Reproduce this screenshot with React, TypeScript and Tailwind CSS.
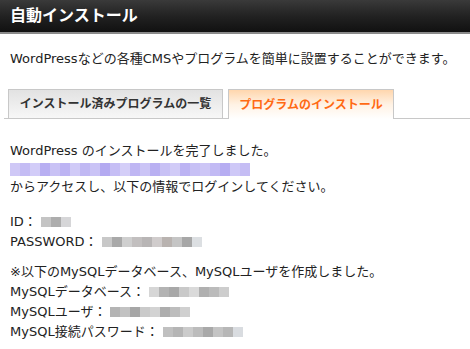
const FONT = "font-['DejaVu_Sans','Noto_Sans_CJK_JP',sans-serif]";

// mosaic blocks stand in for the blurred-out values
const Mosaic = ({ cells, h = "h-[10px]" }: { cells: string[]; h?: string }) => (
  <span className={`inline-flex align-middle blur-[0.6px] ${h}`}>
    {cells.map((c, i) => (
      <span key={i} className={`w-[10px] h-full ${c}`} />
    ))}
  </span>
);

const linkCells = [
  "bg-[#cfc8f6]", "bg-[#c4bcf4]", "bg-[#d2ccf8]", "bg-[#b8aff2]", "bg-[#c9c2f5]",
  "bg-[#bdb4f3]", "bg-[#d0caf7]", "bg-[#c0b8f3]", "bg-[#cac3f6]", "bg-[#b4aaf1]",
  "bg-[#c6bef5]", "bg-[#d4cef8]", "bg-[#bfb6f3]", "bg-[#cbc4f6]", "bg-[#b9b0f2]",
  "bg-[#c8c1f5]", "bg-[#d1cbf7]", "bg-[#bcb3f3]", "bg-[#c7c0f5]", "bg-[#cdc6f6]",
  "bg-[#c2baf4]", "bg-[#b6adf2]", "bg-[#cec8f7]", "bg-[#c5bdf4]",
];

const App = () => {
  return (
    <div className={`w-[470px] h-[349px] bg-white overflow-hidden ${FONT}`}>
      {/* title bar */}
      <header className="h-[34px] bg-gradient-to-b from-[#3a3a3a] via-[#222] to-[#111] border-b-2 border-[#8a8a8a] flex items-center px-[10px]">
        <h1 className="text-white font-bold text-[16px] leading-none">自動インストール</h1>
      </header>

      <p className="mt-[16px] px-[10px] text-[13px] leading-[18px] text-[#222] whitespace-nowrap">
        WordPressなどの各種CMSやプログラムを簡単に設置することができます。
      </p>

      {/* tabs */}
      <nav className="mt-[21px] ml-[4px] flex items-end gap-[5px] pl-[4px] border-b border-[#c8c8c8] h-[30px]">
        <div className="w-[215px] h-[29px] flex items-center justify-center border border-b-0 border-[#c8c8c8] bg-gradient-to-b from-[#e2e2e2] to-[#f7f7f7] text-[12px] font-bold text-[#333]">
          インストール済みプログラムの一覧
        </div>
        <div className="w-[166px] h-[30px] -mb-px flex items-center justify-center border border-b-0 border-[#c8c8c8] bg-gradient-to-b from-[#ffd6ad] via-[#fff2e4] to-white text-[12px] font-bold text-[#ff6a14]">
          プログラムのインストール
        </div>
      </nav>

      {/* result */}
      <div className="px-[10px] pt-[23px] text-[13px] text-[#222] whitespace-nowrap">
        <div className="leading-[18px]">
          <p>WordPress のインストールを完了しました。</p>
          <p className="h-[18px] flex items-center">
            <Mosaic cells={linkCells} h="h-[13px]" />
          </p>
          <p>からアクセスし、以下の情報でログインしてください。</p>
        </div>

        <div className="mt-[16px] leading-[20px]">
          <p className="flex items-center">
            ID：<span className="w-[4px]" />
            <Mosaic cells={["bg-[#c4c4c4]", "bg-[#adadad]", "bg-[#d6d6d8]"]} />
          </p>
          <p className="flex items-center">
            PASSWORD：<span className="w-[4px]" />
            <Mosaic
              cells={[
                "bg-[#c8c8c8]", "bg-[#a9a9a9]", "bg-[#cfcfcf]", "bg-[#c2bfbf]", "bg-[#b8b5b5]",
                "bg-[#d0cccc]", "bg-[#b9b3b0]", "bg-[#c5c5c5]", "bg-[#a7a7a7]", "bg-[#dcdfe2]",
              ]}
            />
          </p>
        </div>

        <div className="mt-[10px] leading-[20px]">
          <p>※以下のMySQLデータベース、MySQLユーザを作成しました。</p>
          <p className="flex items-center">
            MySQLデータベース：<span className="w-[4px]" />
            <Mosaic
              cells={[
                "bg-[#d6d6d6]", "bg-[#b3b3b3]", "bg-[#a8a8a8]", "bg-[#c9c9c9]",
                "bg-[#dadada]", "bg-[#b0b0b0]", "bg-[#bbbbbb]", "bg-[#cdcdcd]",
              ]}
            />
          </p>
          <p className="flex items-center">
            MySQLユーザ：<span className="w-[4px]" />
            <Mosaic
              cells={[
                "bg-[#b4b4b4]", "bg-[#c2c2c2]", "bg-[#a6a6a6]", "bg-[#cacaca]",
                "bg-[#d3d3d3]", "bg-[#adadad]", "bg-[#bdbdbd]", "bg-[#d0d0d0]",
              ]}
            />
          </p>
          <p className="flex items-center">
            MySQL接続パスワード：<span className="w-[4px]" />
            <Mosaic
              cells={[
                "bg-[#c0c0c0]", "bg-[#b5b5b5]", "bg-[#cbcbcb]", "bg-[#bcbcbc]",
                "bg-[#a9a9a9]", "bg-[#c4c4c4]", "bg-[#b7b7b7]", "bg-[#d9dce0]",
              ]}
            />
          </p>
        </div>
      </div>
    </div>
  );
};

export default App;
